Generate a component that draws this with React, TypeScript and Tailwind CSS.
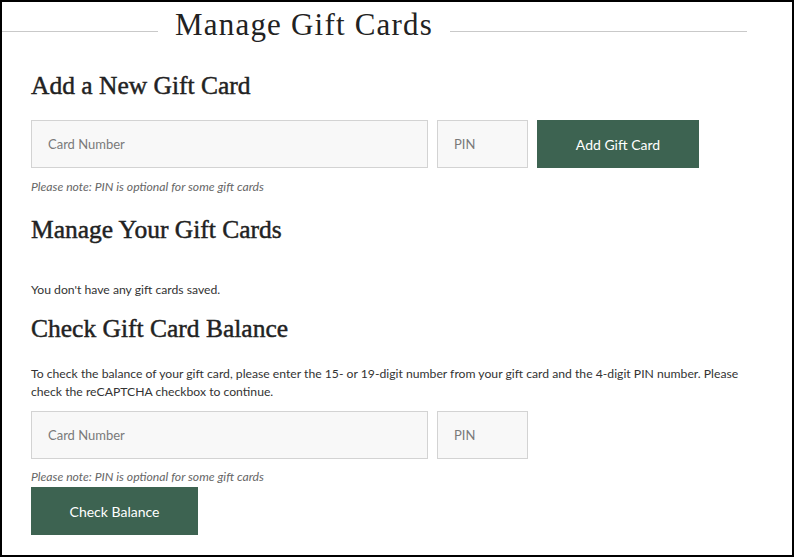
import React from "react";

const serif = { fontFamily: '"Liberation Serif", "Times New Roman", serif' };

function Heading({ children, className = "" }: { children: React.ReactNode; className?: string }) {
  return (
    <h2
      className={`text-[25.5px] leading-[26px] text-[#222] font-normal [-webkit-text-stroke:0.45px_#222] ${className}`}
      style={serif}
    >
      {children}
    </h2>
  );
}

function Field({ placeholder, width }: { placeholder: string; width: string }) {
  return (
    <input
      placeholder={placeholder}
      className={`${width} h-[48px] border border-[#d3d3d3] bg-[#f8f8f8] pl-[16px] text-[13px] text-[#333] placeholder:text-[#7a7a7a] outline-none`}
    />
  );
}

export default function App() {
  return (
    <div
      className="w-[794px] h-[557px] border-2 border-black bg-white overflow-hidden box-border"
      style={{ fontFamily: 'Lato, "Liberation Sans", sans-serif' }}
    >
      <div className="flex items-start h-[50px]">
        <div className="w-[156px] h-px bg-[#c9c9c9] mt-[29px]" />
        <h1
          className="ml-[17px] mr-[17px] mt-[7px] text-[31px] leading-none tracking-[1.2px] text-[#222] font-normal"
          style={serif}
        >
          Manage Gift Cards
        </h1>
        <div className="w-[297px] h-px bg-[#c9c9c9] mt-[29px]" />
      </div>

      <div className="pl-[29px] w-[744px]">
        <Heading className="mt-[21px]">Add a New Gift Card</Heading>
        <div className="flex gap-[9px] mt-[21px]">
          <Field placeholder="Card Number" width="w-[397px]" />
          <Field placeholder="PIN" width="w-[91px]" />
          <button className="w-[162px] h-[48px] bg-[#3d6351] text-white text-[14px]">Add Gift Card</button>
        </div>
        <p className="mt-[11px] text-[12.2px] leading-[16px] italic text-[#666]">
          Please note: PIN is optional for some gift cards
        </p>

        <Heading className="mt-[22px]">Manage Your Gift Cards</Heading>
        <p className="mt-[38px] text-[12.2px] leading-[18px] text-[#333]">You don't have any gift cards saved.</p>

        <Heading className="mt-[17px]">Check Gift Card Balance</Heading>
        <p className="mt-[23px] text-[12.2px] leading-[18px] text-[#333] w-[715px]">
          To check the balance of your gift card, please enter the 15- or 19-digit number from your gift card and the
          4-digit PIN number. Please check the reCAPTCHA checkbox to continue.
        </p>
        <div className="flex gap-[9px] mt-[10px]">
          <Field placeholder="Card Number" width="w-[397px]" />
          <Field placeholder="PIN" width="w-[91px]" />
        </div>
        <p className="mt-[10px] text-[12.2px] leading-[16px] italic text-[#666]">
          Please note: PIN is optional for some gift cards
        </p>
        <button className="mt-[2px] w-[167px] h-[48px] bg-[#3d6351] text-white text-[14px]">Check Balance</button>
      </div>
    </div>
  );
}
